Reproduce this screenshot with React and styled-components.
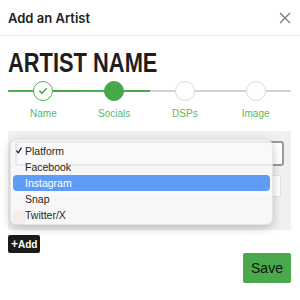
import React from "react";
import styled, { createGlobalStyle, css } from "styled-components";

const GlobalStyle = createGlobalStyle`
  body {
    margin: 0;
    background: #ffffff;
    font-family: "Inter", "Liberation Sans", sans-serif;
  }
`;

const Modal = styled.div`
  width: 300px;
  height: 300px;
  background: #fff;
`;

const Header = styled.div`
  height: 35px;
  display: flex;
  align-items: center;
  justify-content: space-between;
  padding: 0 9px 0 8px;
  border-bottom: 1px solid #ececec;
`;

const HeaderTitle = styled.div`
  font-size: 13px;
  font-weight: 600;
  color: #222;
`;

const CloseButton = styled.button`
  border: none;
  background: none;
  padding: 0;
  width: 12px;
  height: 12px;
  display: flex;
  cursor: pointer;
`;

const Body = styled.div`
  padding: 0 9px 0 8px;
`;

// the original uses a condensed bold face; squeeze Liberation Sans to match
const ArtistName = styled.h1`
  margin: 12px 0 0;
  font-family: "Liberation Sans", Arial, sans-serif;
  font-size: 27px;
  line-height: 30px;
  font-weight: 700;
  color: #1e1e1e;
  transform: scaleX(0.81);
  transform-origin: left center;
  white-space: nowrap;
`;

const Stepper = styled.div`
  display: grid;
  grid-template-columns: repeat(4, 1fr);
  margin-top: 3px;
`;

const Step = styled.div`
  position: relative;
  display: flex;
  flex-direction: column;
  align-items: center;

  &::before,
  &::after {
    content: "";
    position: absolute;
    top: 9px;
    height: 2px;
    width: 50%;
  }
  &::before {
    left: 0;
    background: ${(p) => (p.$leftDone ? "#4caf50" : "#d4d4d4")};
  }
  &::after {
    right: 0;
    background: ${(p) => (p.$rightDone ? "#46a84a" : "#d4d4d4")};
  }
`;

const Circle = styled.div`
  position: relative;
  z-index: 1;
  width: 20px;
  height: 20px;
  box-sizing: border-box;
  border-radius: 50%;
  display: flex;
  align-items: center;
  justify-content: center;
  background: #fff;
  border: 1.5px solid #dadada;
  ${(p) =>
    p.$state === "done" &&
    css`
      border-color: #4caf50;
    `}
  ${(p) =>
    p.$state === "active" &&
    css`
      background: #46a84a;
      border-color: #46a84a;
    `}
`;

const StepLabel = styled.div`
  margin-top: 6px;
  font-family: "Liberation Sans", Arial, sans-serif;
  font-size: 10px;
  line-height: 13px;
  color: #5cb85c;
`;

const Panel = styled.div`
  position: relative;
  margin-top: 11px;
  height: 99px;
  background: #f0f0f0;
  padding: 10px 7px 0 7px;
  box-sizing: border-box;
`;

const SelectBox = styled.div`
  height: 25px;
  box-sizing: border-box;
  background: #fff;
  border: 2px solid #9a9a9a;
  border-radius: 3px;
`;

const TextInput = styled.div`
  margin-top: 9px;
  margin-right: 3px;
  height: 22px;
  box-sizing: border-box;
  background: #fff;
  border: 1px solid #e2e2e2;
  border-radius: 2px;
`;

const SocialDot = styled.div`
  margin: 13px 0 0 -3px;
  width: 15px;
  height: 15px;
  border-radius: 50%;
  background: #f0a9ad;
`;

const Menu = styled.ul`
  position: absolute;
  top: 8px;
  left: 2px;
  width: 263px;
  margin: 0;
  padding: 3px 0 1px;
  list-style: none;
  background: rgba(248, 248, 248, 0.84);
  border: 1px solid rgba(0, 0, 0, 0.08);
  border-radius: 7px;
  box-shadow: 0 3px 10px rgba(0, 0, 0, 0.22);
  box-sizing: border-box;
  z-index: 2;
`;

const MenuItem = styled.li`
  position: relative;
  height: 16px;
  line-height: 16px;
  margin: 0 2px;
  padding-left: 12px;
  border-radius: 4px;
  font-family: "Liberation Sans", Arial, sans-serif;
  font-size: 10.5px;
  color: ${(p) => (p.$highlight ? "#fff" : "#262626")};
  background: ${(p) => (p.$highlight ? "#5f9cf5" : "transparent")};
`;

const Check = styled.svg`
  position: absolute;
  left: 3px;
  top: 4px;
`;

const AddButton = styled.button`
  margin-top: 5px;
  height: 18px;
  padding: 0 3px;
  border: none;
  border-radius: 2px;
  background: #1b1b1b;
  color: #fff;
  font-family: "Liberation Sans", Arial, sans-serif;
  font-size: 10px;
  font-weight: 700;
  display: flex;
  align-items: center;
`;

const Plus = styled.span`
  font-size: 12px;
`;

const Footer = styled.div`
  display: flex;
  justify-content: flex-end;
`;

const SaveButton = styled.button`
  width: 48px;
  height: 30px;
  border: none;
  border-radius: 2px;
  background: #4aa94c;
  color: #111;
  font-family: "Liberation Sans", Arial, sans-serif;
  font-size: 14px;
`;

const steps = [
  { label: "Name", state: "done" },
  { label: "Socials", state: "active" },
  { label: "DSPs", state: "todo" },
  { label: "Image", state: "todo" },
];

const platforms = ["Platform", "Facebook", "Instagram", "Snap", "Twitter/X"];

function App() {
  return (
    <Modal>
      <GlobalStyle />
      <Header>
        <HeaderTitle>Add an Artist</HeaderTitle>
        <CloseButton aria-label="Close">
          <svg width="12" height="12" viewBox="0 0 12 12">
            <path d="M1 1L11 11M11 1L1 11" stroke="#7a7a7a" strokeWidth="1.3" />
          </svg>
        </CloseButton>
      </Header>
      <Body>
        <ArtistName>ARTIST NAME</ArtistName>
        <Stepper>
          {steps.map((s, i) => (
            <Step key={s.label} $leftDone={i <= 1} $rightDone={i <= 1}>
              <Circle $state={s.state}>
                {s.state === "done" && (
                  <svg width="10" height="10" viewBox="0 0 10 10">
                    <path
                      d="M1.8 5.2L4 7.3L8.3 2.8"
                      fill="none"
                      stroke="#4caf50"
                      strokeWidth="1.6"
                      strokeLinecap="round"
                      strokeLinejoin="round"
                    />
                  </svg>
                )}
              </Circle>
              <StepLabel>{s.label}</StepLabel>
            </Step>
          ))}
        </Stepper>
        <Panel>
          <SelectBox />
          <TextInput />
          <SocialDot />
          <Menu>
            {platforms.map((p, i) => (
              <MenuItem key={p} $highlight={p === "Instagram"}>
                {i === 0 && (
                  <Check width="6" height="7" viewBox="0 0 6 7">
                    <path
                      d="M0.7 3.8L2.2 5.9L5.3 0.9"
                      fill="none"
                      stroke="#222"
                      strokeWidth="1.2"
                      strokeLinecap="round"
                      strokeLinejoin="round"
                    />
                  </Check>
                )}
                {p}
              </MenuItem>
            ))}
          </Menu>
        </Panel>
        <AddButton>
          <Plus>+</Plus>Add
        </AddButton>
        <Footer>
          <SaveButton>Save</SaveButton>
        </Footer>
      </Body>
    </Modal>
  );
}

export default App;
